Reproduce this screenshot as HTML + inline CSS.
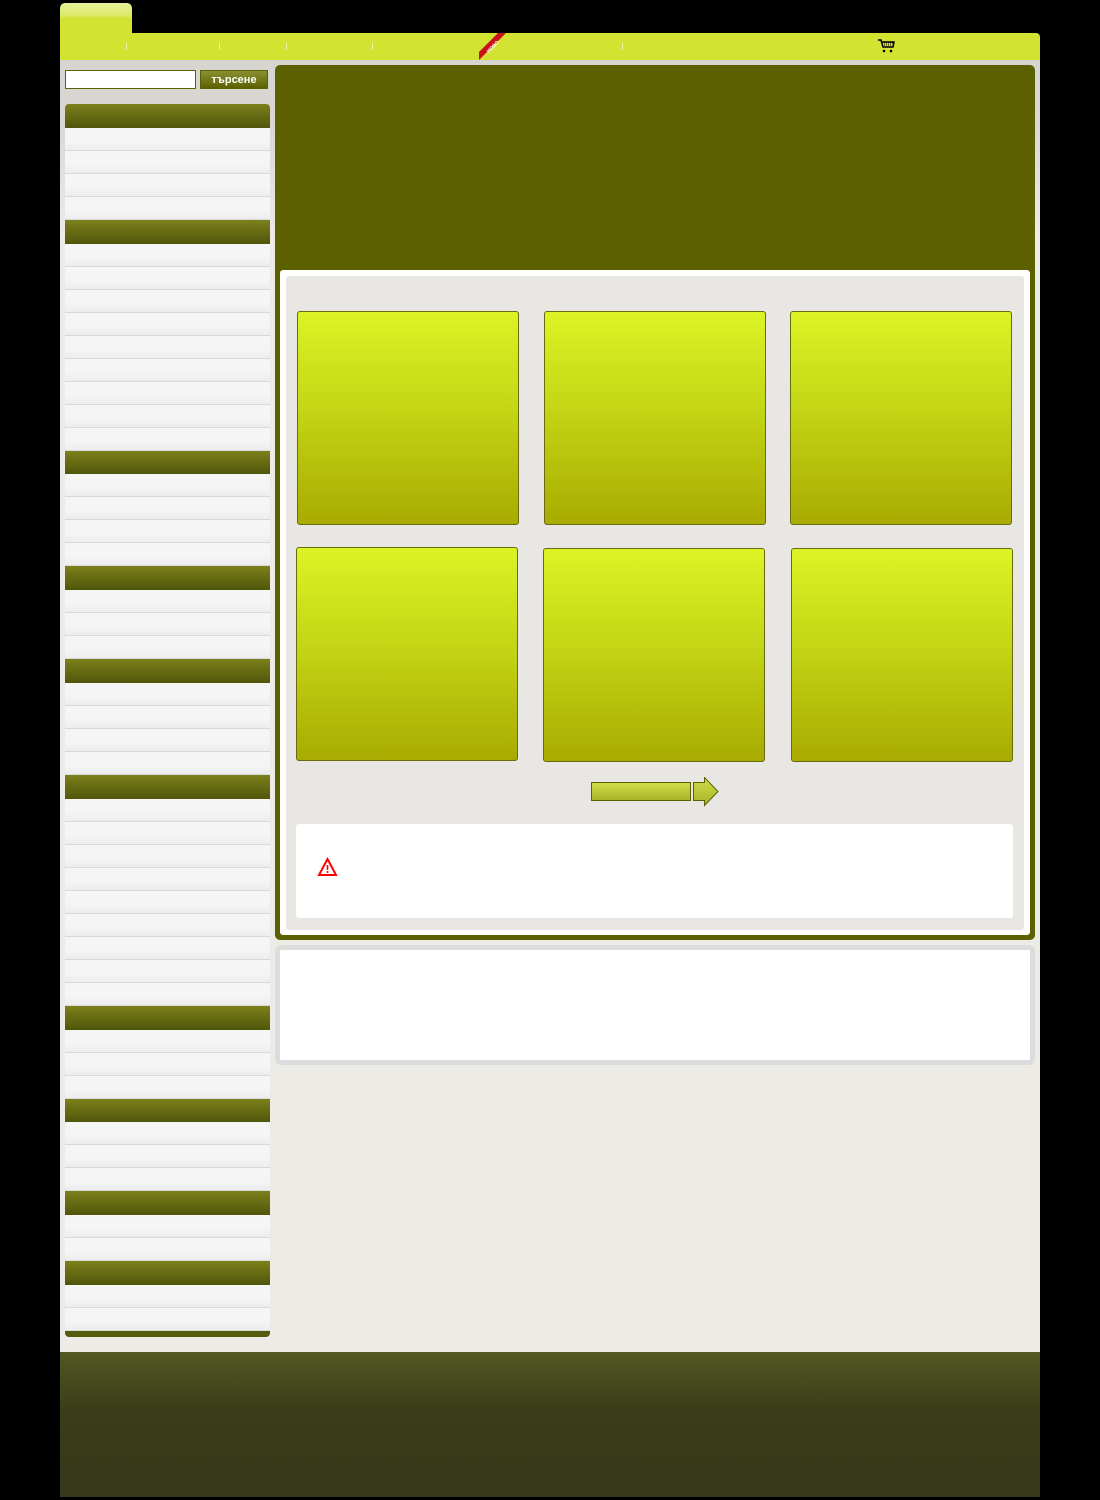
<!DOCTYPE html>
<html><head><meta charset="utf-8"><style>
*{margin:0;padding:0;box-sizing:border-box}
body{width:1100px;height:1500px;background:#000;position:relative;overflow:hidden;font-family:"Liberation Sans",sans-serif}
.a{position:absolute}
.page{left:60px;top:60px;width:980px;height:1292px;background:linear-gradient(#d6d5d0 0,#d8d7d2 60px,#ecebe5 180px,#ecebe5 100%)}
.nav{left:60px;top:33px;width:980px;height:27px;background:#d2e332;border-radius:0 4px 0 0}
.tab{left:60px;top:3px;width:72px;height:30px;border-radius:5px 5px 0 0;background:linear-gradient(#e8f29a 0,#dbe965 13px,#d2e332 15px)}
.sep{top:43px;width:1px;height:7px;background:#eef5a8}
.hd{left:65px;width:205px;height:24px;background:linear-gradient(#7c801c,#50560a)}
.it{left:65px;width:205px;height:23px;background:linear-gradient(#f5f5f5 60%,#ededee);border-bottom:1px solid #d9d9d9}
.tile{width:222px;height:214px;border:1px solid #6a6a10;border-radius:3px;background:linear-gradient(#dcf424,#c4d616 45%,#a9ab00)}
</style></head><body>
<div class="a page"></div>
<div class="a tab"></div>
<div class="a nav"></div>
<div class="a sep" style="left:126px"></div><div class="a sep" style="left:219px"></div><div class="a sep" style="left:286px"></div><div class="a sep" style="left:372px"></div><div class="a sep" style="left:622px"></div>
<svg class="a" style="left:479px;top:33px" width="28" height="27"><polygon points="0,19 19,0 27,0 0,27" fill="#c8101a"/><text x="13.5" y="15.5" font-size="5" font-weight="bold" fill="#fff" text-anchor="middle" font-family="Liberation Sans" transform="rotate(-45 13.5 13.5)">НОВО</text></svg>
<svg class="a" style="left:877px;top:39px" width="20" height="14"><path d="M1 1h3l2 7h10l1-5H5" fill="none" stroke="#000" stroke-width="1.5"/><path d="M7 4h9M7 6h8" stroke="#000" stroke-dasharray="1 1"/><circle cx="7" cy="12" r="1.3"/><circle cx="14" cy="12" r="1.3"/></svg>
<div class="a" style="left:65px;top:70px;width:131px;height:19px;background:#fff;border:1px solid #5c6000"></div>
<div class="a" style="left:200px;top:70px;width:68px;height:19px;background:linear-gradient(#8a9030,#5c6000);border:1px solid #5c6000;color:#fff;font-weight:bold;font-size:11px;text-align:center;line-height:19px">търсене</div>
<div class="a hd" style="top:104px;border-radius:4px 4px 0 0"></div>
<div class="a it" style="top:128px"></div><div class="a it" style="top:151px"></div><div class="a it" style="top:174px"></div><div class="a it" style="top:197px"></div>
<div class="a hd" style="top:220px"></div>
<div class="a it" style="top:244px"></div><div class="a it" style="top:267px"></div><div class="a it" style="top:290px"></div><div class="a it" style="top:313px"></div><div class="a it" style="top:336px"></div><div class="a it" style="top:359px"></div><div class="a it" style="top:382px"></div><div class="a it" style="top:405px"></div><div class="a it" style="top:428px"></div>
<div class="a hd" style="top:451px;height:23px"></div>
<div class="a it" style="top:474px"></div><div class="a it" style="top:497px"></div><div class="a it" style="top:520px"></div><div class="a it" style="top:543px"></div>
<div class="a hd" style="top:566px"></div>
<div class="a it" style="top:590px"></div><div class="a it" style="top:613px"></div><div class="a it" style="top:636px"></div>
<div class="a hd" style="top:659px"></div>
<div class="a it" style="top:683px"></div><div class="a it" style="top:706px"></div><div class="a it" style="top:729px"></div><div class="a it" style="top:752px"></div>
<div class="a hd" style="top:775px"></div>
<div class="a it" style="top:799px"></div><div class="a it" style="top:822px"></div><div class="a it" style="top:845px"></div><div class="a it" style="top:868px"></div><div class="a it" style="top:891px"></div><div class="a it" style="top:914px"></div><div class="a it" style="top:937px"></div><div class="a it" style="top:960px"></div><div class="a it" style="top:983px"></div>
<div class="a hd" style="top:1006px"></div>
<div class="a it" style="top:1030px"></div><div class="a it" style="top:1053px"></div><div class="a it" style="top:1076px"></div>
<div class="a hd" style="top:1099px;height:23px"></div>
<div class="a it" style="top:1122px"></div><div class="a it" style="top:1145px"></div><div class="a it" style="top:1168px"></div>
<div class="a hd" style="top:1191px"></div>
<div class="a it" style="top:1215px"></div><div class="a it" style="top:1238px"></div>
<div class="a hd" style="top:1261px"></div>
<div class="a it" style="top:1285px"></div><div class="a it" style="top:1308px"></div>
<div class="a" style="left:65px;top:1331px;width:205px;height:6px;background:#555a0c;border-radius:0 0 4px 4px"></div>

<div class="a" style="left:275px;top:65px;width:760px;height:875px;background:#5c6000;border-radius:5px"></div>
<div class="a" style="left:280px;top:270px;width:750px;height:665px;background:#fff;border-radius:3px"></div>
<div class="a" style="left:286px;top:276px;width:738px;height:654px;background:#e8e7e3;border-radius:3px"></div>
<div class="a tile" style="left:297px;top:311px"></div>
<div class="a tile" style="left:544px;top:311px"></div>
<div class="a tile" style="left:790px;top:311px"></div>
<div class="a tile" style="left:296px;top:547px"></div>
<div class="a tile" style="left:543px;top:548px"></div>
<div class="a tile" style="left:791px;top:548px"></div>
<div class="a" style="left:591px;top:782px;width:100px;height:19px;border:1px solid #5c6000;background:linear-gradient(#d0dc48,#a8b428)"></div>
<svg class="a" style="left:693px;top:777px" width="27" height="30"><defs><linearGradient id="g" x1="0" y1="0" x2="0" y2="1"><stop offset="0" stop-color="#d0dc48"/><stop offset="1" stop-color="#a8b428"/></linearGradient></defs><polygon points="0.5,5.5 11.5,5.5 11.5,0.5 25,14.5 11.5,28.5 11.5,23.5 0.5,23.5" fill="url(#g)" stroke="#5c6000"/></svg>
<div class="a" style="left:296px;top:824px;width:717px;height:94px;background:#fff;border-radius:3px"></div>
<svg class="a" style="left:317px;top:857px" width="22" height="20"><polygon points="10.5,2 19,18 2,18" fill="none" stroke="#f00" stroke-width="2"/><rect x="9.7" y="8" width="1.6" height="5" fill="#f00"/><rect x="9.7" y="14" width="1.6" height="2" fill="#f00"/></svg>
<div class="a" style="left:275px;top:945px;width:760px;height:120px;background:#fff;border:5px solid #dcdcdc;border-radius:6px"></div>
<div class="a" style="left:60px;top:1352px;width:980px;height:145px;background:repeating-linear-gradient(45deg,rgba(0,0,0,0.06) 0 1px,transparent 1px 3px),linear-gradient(#545a22,#3c3e1a 40%,#38381a)"></div>
</body></html>
